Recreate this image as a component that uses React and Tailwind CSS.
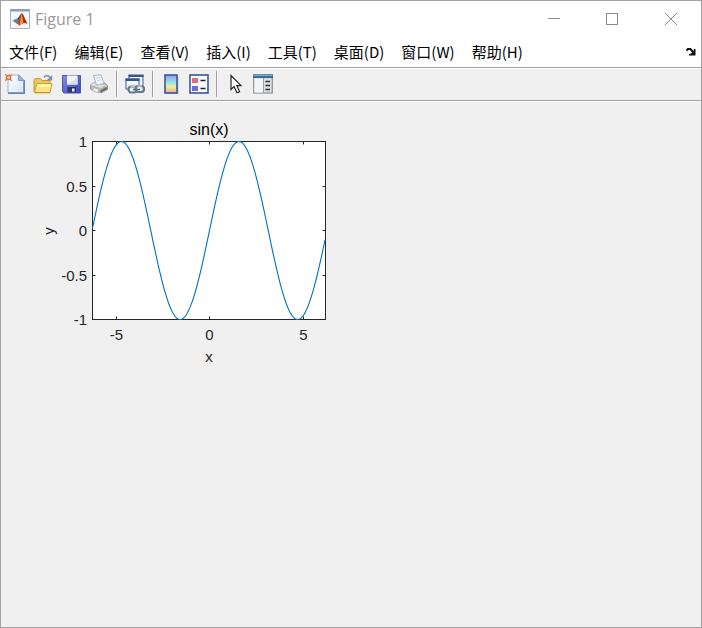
import { Fragment } from 'react'

const MENUS = ['文件(F)', '编辑(E)', '查看(V)', '插入(I)', '工具(T)', '桌面(D)', '窗口(W)', '帮助(H)']

const AXES = { left: 92.5, right: 325.5, top: 39.5, bottom: 217.5 }
const X_ZERO = 209.5
const X_UNIT = 18.7
const X_TICKS = [-5, 0, 5]
const Y_TICKS = [1, 0.5, 0, -0.5, -1]

const toX = (x) => X_ZERO + x * X_UNIT
const toY = (y) => 128.5 - y * 89

const MatlabLogo = () => (
  <svg viewBox="0 0 20 20" className="h-5 w-5" aria-hidden="true">
    <rect x="0.5" y="0.5" width="19" height="19" fill="#f4f6f8" stroke="#a9b2bc" />
    <rect x="0" y="0" width="20" height="2.5" fill="#8ba0bd" />
    <path d="M2.5 11.5 L7 9.5 L9.5 12 L6.5 14.5 Z" fill="#4c86b4" />
    <path d="M7 9.5 C9 9 10 5 12 4 L9.8 12 Z" fill="#264d7c" />
    <path d="M6.5 14.5 C9 12 10 5 12 4 C13.5 5 15.5 12 17.5 14.8 C15 13.5 12 14 9.8 16.8 C8.8 16 7.8 14.8 6.5 14.5 Z" fill="#c9401d" />
    <path d="M12 4 C12.5 7 13 11 12.8 14.2 C11.5 14.7 10.7 15.6 9.8 16.8 C10 13 11 7 12 4 Z" fill="#f39a3b" />
    <path d="M12.2 4.4 C14.2 7 15.5 12.5 17.5 14.8 C16 13.7 14.8 13.6 13.8 13.9 Z" fill="#9c2c18" />
  </svg>
)

const NewIcon = () => (
  <svg viewBox="0 0 20 20" className="h-5 w-5">
    <defs>
      <linearGradient id="paper" x1="0" y1="0" x2="1" y2="1">
        <stop offset="0" stopColor="#ffffff" />
        <stop offset="1" stopColor="#d3e6fa" />
      </linearGradient>
    </defs>
    <path d="M3 2 V18.5 H18.5 V6 L14 1 H4 Z" fill="url(#paper)" stroke="#9db4d8" />
    <path d="M3 19.2 H19.3 V6" fill="none" stroke="#6681b3" strokeWidth="1.5" />
    <path d="M13.5 1 V6.5 H19 Z" fill="#9bb4da" stroke="#7f99c6" />
    <path d="M0 0 L7 7 M7 0 L0 7" stroke="#e88a62" strokeWidth="1.6" />
    <circle cx="3.5" cy="3.5" r="2.2" fill="#fbc79c" stroke="#dc6740" strokeWidth="1.2" />
  </svg>
)

const OpenIcon = () => (
  <svg viewBox="0 0 20 20" className="h-5 w-5">
    <path d="M1 18 V6 L2 4.5 H7.5 L9 6.5 H17 V18 Z" fill="#edc65a" stroke="#c79a35" />
    <path d="M4 9.5 H19 L17 18.5 H1.5 Z" fill="#fbe684" stroke="#cda33b" />
    <path d="M4.5 11.5 H17" stroke="#fff8c4" strokeWidth="2" />
    <path d="M2 18.7 H17" stroke="#bd9030" strokeWidth="1.2" />
    <path d="M11 3.5 C12.5 1 15 1 17 3.5" fill="none" stroke="#8398b0" strokeWidth="1.6" />
    <path d="M19.2 1 V6.5 H13.5 Z" fill="#7590b4" />
  </svg>
)

const SaveIcon = () => (
  <svg viewBox="0 0 20 20" className="h-5 w-5">
    <defs>
      <linearGradient id="disk" x1="0" y1="0" x2="1" y2="1">
        <stop offset="0" stopColor="#8790e0" />
        <stop offset="1" stopColor="#3842ae" />
      </linearGradient>
    </defs>
    <path d="M1.5 1.5 H19.5 V19 H3 L1.5 17.5 Z" fill="url(#disk)" stroke="#4a54ae" />
    <rect x="6" y="1.5" width="10.5" height="9" fill="#f3f6fd" />
    <path d="M6 10.5 L16.5 3.5 V10.5 Z" fill="#d9e2f4" />
    <rect x="6.5" y="13" width="8.5" height="5.5" fill="#2c3574" />
    <rect x="11" y="14.5" width="2.5" height="3" fill="#f1f3fb" />
  </svg>
)

const PrintIcon = () => (
  <svg viewBox="0 0 20 20" className="h-5 w-5">
    <path d="M1.5 11 L5 8.5 H15 L18.5 11.5 V15.5 L12 19 L1.5 15 Z" fill="#b8babc" stroke="#96999d" />
    <path d="M1.5 11 L5 8.5 L17.5 11.5 L12 14 Z" fill="#dddfe1" />
    <path d="M4.5 1.5 L12 0.8 L15 9.5 L7.5 11 Z" fill="#f1f7fd" stroke="#a8b8cc" />
    <path d="M7 4 L11.5 3.5 M8 6.5 L12.5 6" stroke="#c2d2e5" />
    <path d="M11.5 17.5 L18 14" fill="none" stroke="#686b70" strokeWidth="2" />
    <path d="M5 13.5 L10.5 15.5 L8.5 18.5 L3 16.5 Z" fill="#f4f4f0" stroke="#999" strokeWidth="0.7" />
    <rect x="14" y="12.5" width="2" height="1.5" fill="#a6b84a" />
  </svg>
)

const LinkIcon = () => (
  <svg viewBox="0 0 20 20" className="h-5 w-5">
    <rect x="4" y="1.5" width="14" height="10" fill="#eef3fb" stroke="#3c5c98" />
    <rect x="3.5" y="0.5" width="15" height="2.5" fill="#34558f" />
    <rect x="1" y="5" width="13" height="10" fill="#f3f6fb" stroke="#3c5c98" />
    <rect x="0.5" y="4.5" width="14" height="2.5" fill="#34558f" />
    <rect x="3.5" y="12.5" width="8.5" height="6" rx="3" fill="#eef2f7" stroke="#66788e" strokeWidth="2.2" />
    <rect x="10.5" y="12" width="8.5" height="6" rx="3" fill="#eef2f7" stroke="#66788e" strokeWidth="2.2" />
    <path d="M5.5 12.5 H10 M12.5 12 H17" stroke="#b4c5da" strokeWidth="1.4" />
    <path d="M8 15.5 H15" stroke="#5c6e84" strokeWidth="1.6" />
  </svg>
)

const ColorbarIcon = () => (
  <svg viewBox="0 0 20 20" className="h-5 w-5">
    <defs>
      <linearGradient id="bar" x1="0" y1="0" x2="0" y2="1">
        <stop offset="0" stopColor="#a493ea" />
        <stop offset="0.35" stopColor="#8fdcf0" />
        <stop offset="0.65" stopColor="#e8ee9e" />
        <stop offset="1" stopColor="#f2a79a" />
      </linearGradient>
    </defs>
    <path d="M5 19.7 H17 V3" fill="none" stroke="#b9bec9" />
    <rect x="4" y="1" width="12" height="18" fill="url(#bar)" stroke="#3a5794" strokeWidth="1.6" />
  </svg>
)

const LegendIcon = () => (
  <svg viewBox="0 0 20 20" className="h-5 w-5">
    <rect x="1" y="1" width="18" height="18" fill="#f7f9fe" stroke="#3a5794" strokeWidth="1.6" />
    <rect x="3" y="4" width="6" height="5" fill="#e46c6a" />
    <rect x="3" y="12" width="6" height="5" fill="#6c6ce4" />
    <path d="M11.5 6.5 H16.5 M11.5 14.5 H16.5" stroke="#222" strokeWidth="1.4" />
  </svg>
)

const CursorIcon = () => (
  <svg viewBox="0 0 20 20" className="h-5 w-5">
    <path d="M6 1.5 V15.5 L9 12.5 L12 18.8 L14.6 17.6 L11.8 11.6 H16 Z" fill="#fff" stroke="#222" strokeWidth="1.2" />
  </svg>
)

const InspectorIcon = () => (
  <svg viewBox="0 0 20 20" className="h-5 w-5">
    <rect x="0.7" y="1" width="18.6" height="18" fill="#dcddde" stroke="#8d9298" strokeWidth="1.2" />
    <rect x="0" y="0.5" width="20" height="3.5" fill="#356486" />
    <rect x="0.5" y="1" width="19" height="1.3" fill="#70a6c5" />
    <rect x="1.5" y="4.5" width="9" height="14" fill="#f5f5f5" />
    <path d="M10.5 4 V19" stroke="#9a9fa4" />
    <path d="M12.5 7.5 H17 M12.5 11.5 H17 M12.5 15.5 H17" stroke="#303030" strokeWidth="1.4" />
  </svg>
)

const TOOLBAR = [
  [
    { label: '新建图窗', Icon: NewIcon },
    { label: '打开文件', Icon: OpenIcon },
    { label: '保存图窗', Icon: SaveIcon },
    { label: '打印图窗', Icon: PrintIcon }
  ],
  [{ label: '链接绘图', Icon: LinkIcon }],
  [
    { label: '插入颜色栏', Icon: ColorbarIcon },
    { label: '插入图例', Icon: LegendIcon }
  ],
  [
    { label: '编辑绘图', Icon: CursorIcon },
    { label: '打开属性检查器', Icon: InspectorIcon }
  ]
]

const TitleBar = () => (
  <header className="flex h-9 items-center justify-between bg-white pl-[9px]">
    <div className="flex items-center gap-[5px]">
      <MatlabLogo />
      <h1 className="font-['Open_Sans','Noto_Sans',sans-serif] text-base text-[#999999]">Figure 1</h1>
    </div>
    <div className="flex h-full text-[#8c8c8c]">
      <button type="button" aria-label="最小化" className="flex w-[58px] items-center justify-center">
        <svg viewBox="0 0 12 12" className="h-3 w-3" fill="none" stroke="currentColor">
          <path d="M0 5.5 H12" />
        </svg>
      </button>
      <button type="button" aria-label="最大化" className="flex w-[58px] items-center justify-center">
        <svg viewBox="0 0 12 12" className="h-3 w-3" fill="none" stroke="currentColor">
          <rect x="0.5" y="0.5" width="11" height="11" />
        </svg>
      </button>
      <button type="button" aria-label="关闭" className="flex w-[60px] items-center justify-center">
        <svg viewBox="0 0 12 12" className="h-3 w-3" fill="none" stroke="currentColor">
          <path d="M0 0 L12 12 M12 0 L0 12" />
        </svg>
      </button>
    </div>
  </header>
)

const MenuBar = () => (
  <nav className="flex h-[31px] items-center justify-between border-b border-[#a0a0a0] bg-white pr-[5px] pl-2">
    <ul className="flex gap-[17px]">
      {MENUS.map((menu) => (
        <li key={menu}>
          <button type="button" className="block text-[15px] leading-5 whitespace-nowrap text-black">
            {menu}
          </button>
        </li>
      ))}
    </ul>
    <button type="button" aria-label="停靠图窗">
      <svg viewBox="0 0 10 8" className="h-2 w-[10px]">
        <path d="M0.5 2.5 L2 1 H4.5 L7.5 4.5" fill="none" stroke="#111" strokeWidth="2" />
        <path d="M9.5 1 V7.5 H3 V6 L5 5.5 L7.5 3.5 L8 1 Z" fill="#111" />
      </svg>
    </button>
  </nav>
)

const Toolbar = () => (
  <div role="toolbar" className="flex h-[33px] items-center gap-2 border-t border-b border-t-white border-b-[#a0a0a0] pb-px pl-1">
    {TOOLBAR.map((group, index) => (
      <Fragment key={group[0].label}>
        {index > 0 && <span className="-mx-px h-[26px] w-[2px] border-l border-[#a0a0a0] bg-white"></span>}
        {group.map(({ label, Icon }) => (
          <button key={label} type="button" aria-label={label}>
            <Icon />
          </button>
        ))}
      </Fragment>
    ))}
  </div>
)

const SinePlot = () => {
  const points = []
  for (let x = -6.26; x <= 6.21; x += 0.04) {
    points.push(`${toX(x).toFixed(2)},${toY(Math.sin(x)).toFixed(2)}`)
  }
  const { left, right, top, bottom } = AXES

  return (
    <svg
      viewBox="1 0 350 280"
      className="block h-[280px] w-[350px] font-['Liberation_Sans',Arial,sans-serif] text-[15px]"
      fill="#262626"
      role="img"
      aria-label="sin(x)"
    >
      <rect x={left} y={top} width={right - left} height={bottom - top} fill="#fff" stroke="#262626" />
      {X_TICKS.map((tick) => {
        const x = Math.floor(toX(tick)) + 0.5
        return (
          <g key={tick}>
            <path d={`M${x} ${bottom} v-3 M${x} ${top} v3`} stroke="#262626" />
            <text x={x} y="238" textAnchor="middle">{tick}</text>
          </g>
        )
      })}
      {Y_TICKS.map((tick) => {
        const y = Math.floor(toY(tick)) + 0.5
        return (
          <g key={tick}>
            <path d={`M${left} ${y} h3 M${right} ${y} h-3`} stroke="#262626" />
            <text x="87" y={y + 5} textAnchor="end">{tick}</text>
          </g>
        )
      })}
      <polyline points={points.join(' ')} fill="none" stroke="#0072bd" strokeWidth="1.1" />
      <text x="209" y="33" textAnchor="middle" fill="#000" className="text-base">sin(x)</text>
      <text x="209" y="260" textAnchor="middle">x</text>
      <text x="54" y="129" textAnchor="middle" transform="rotate(-90 54 129)">y</text>
    </svg>
  )
}

const App = () => {
  return (
    <div className="flex min-h-screen flex-col border border-[#a0a0a0] bg-[#f0f0f0] font-['Noto_Sans_CJK_SC',sans-serif]">
      <TitleBar />
      <MenuBar />
      <Toolbar />
      <main className="flex-1 border-t border-white">
        <SinePlot />
      </main>
    </div>
  )
}

export default App
